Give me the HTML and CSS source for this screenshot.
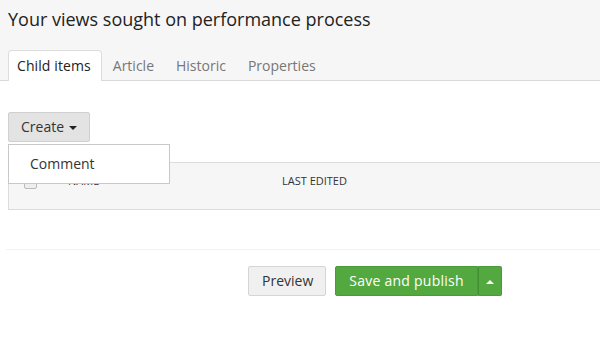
FILE: index.html
```html
<!DOCTYPE html>
<html lang="en">
<head>
    <meta charset="UTF-8">
    <title>Your views sought on performance process</title>
    <link rel="stylesheet" href="styles.css">
</head>
<body>
    <header class="editor-header">
        <h1>Your views sought on performance process</h1>
        <nav class="tabs">
            <a href="#" class="tab active">Child items</a>
            <a href="#" class="tab">Article</a>
            <a href="#" class="tab">Historic</a>
            <a href="#" class="tab">Properties</a>
        </nav>
    </header>

    <main class="editor-body">
        <div class="create">
            <button class="btn">Create <span class="caret"></span></button>
            <ul class="dropdown">
                <li><a href="#">Comment</a></li>
            </ul>
        </div>

        <div class="list-head">
            <span class="check"></span>
            <span class="col-name">Name</span>
            <span class="col-edited">Last edited</span>
        </div>

        <hr class="divider">

        <div class="actions">
            <button class="btn btn-preview">Preview</button>
            <div class="btn-group">
                <button class="btn btn-success">Save and publish</button>
                <button class="btn btn-success toggle"><span class="caret up"></span></button>
            </div>
        </div>
    </main>
</body>
</html>
```

FILE: styles.css
```css
body {
    margin: 0;
    font-family: 'Open Sans', sans-serif;
    color: #222;
    background: #fff;
    overflow: hidden;
}
.editor-header {
    background: #f6f6f6;
    border-bottom: 1px solid #d9d9d9;
    padding: 0 8px;
}
.editor-header h1 {
    margin: 0;
    padding-top: 6px;
    font-size: 18px;
    font-weight: 400;
    line-height: 26px;
    height: 44px;
}
.tabs {
    display: flex;
    margin-bottom: -1px;
}
.tab {
    padding: 5px 10px 6px;
    font-size: 14px;
    line-height: 19px;
    color: #777;
    text-decoration: none;
    border: 1px solid transparent;
    border-bottom: none;
    border-radius: 4px 4px 0 0;
}
.tab.active {
    padding: 5px 10px 6px 8px;
    letter-spacing: 0.1px;
    background: #fff;
    color: #222;
    border-color: #ddd;
    height: 19px;
}
.editor-body {
    padding: 31px 0 0 8px;
}
.btn {
    font-family: 'Open Sans', sans-serif;
    font-size: 14px;
    line-height: 20px;
    color: #333;
    background: #f0f0f0;
    border: 1px solid #d5d5d5;
    border-radius: 2px;
    padding: 4px 12px;
    cursor: pointer;
}
.caret {
    display: inline-block;
    width: 0;
    height: 0;
    border-left: 4px solid transparent;
    border-right: 4px solid transparent;
    border-top: 4px solid #222;
    vertical-align: middle;
    margin-left: 1px;
}
.caret.up {
    border-top: none;
    border-bottom: 4px solid #fff;
    margin: 0;
}
.create {
    position: relative;
    height: 29px;
}
.create .btn {
    background: #e3e3e3;
    border-color: #d0d0d0;
}
.dropdown {
    position: absolute;
    top: 32px;
    left: 0;
    z-index: 2;
    list-style: none;
    margin: 0;
    padding: 4px 0;
    width: 160px;
    background: #fff;
    border: 1px solid #c8c8c8;
}
.dropdown a {
    display: block;
    padding: 5px 21px;
    font-size: 14px;
    line-height: 20px;
    color: #333;
    text-decoration: none;
}
.list-head {
    margin-top: 21px;
    height: 46px;
    display: flex;
    align-items: flex-start;
    background: #f6f6f6;
    border: 1px solid #dcdcdc;
    border-right: none;
    font-size: 11px;
    line-height: 15px;
    text-transform: uppercase;
    color: #333;
}
.list-head span {
    margin-top: 10px;
}
.list-head .check {
    width: 11px;
    height: 11px;
    margin: 13px 31px 0 15px;
    border: 1px solid #bbb;
    border-radius: 2px;
    background: #eee;
}
.col-name {
    width: 214px;
}
.divider {
    margin: 39px 0 0 -2px;
    border: none;
    border-top: 1px solid #f2f2f2;
}
.actions {
    display: flex;
    gap: 9px;
    margin: 16px 0 0 240px;
}
.btn-preview {
    padding: 4px 12px 4px 13px;
}
.btn-group {
    display: flex;
}
.btn-success {
    background: #53a93f;
    border-color: #4a9b38;
    color: #fff;
    padding: 4px 13px;
    letter-spacing: 0.25px;
}
.btn-success.toggle {
    border-left-color: #448f34;
    padding: 4px 7px;
    border-radius: 0 2px 2px 0;
}
.btn-group .btn-success:first-child {
    border-radius: 2px 0 0 2px;
}
```
